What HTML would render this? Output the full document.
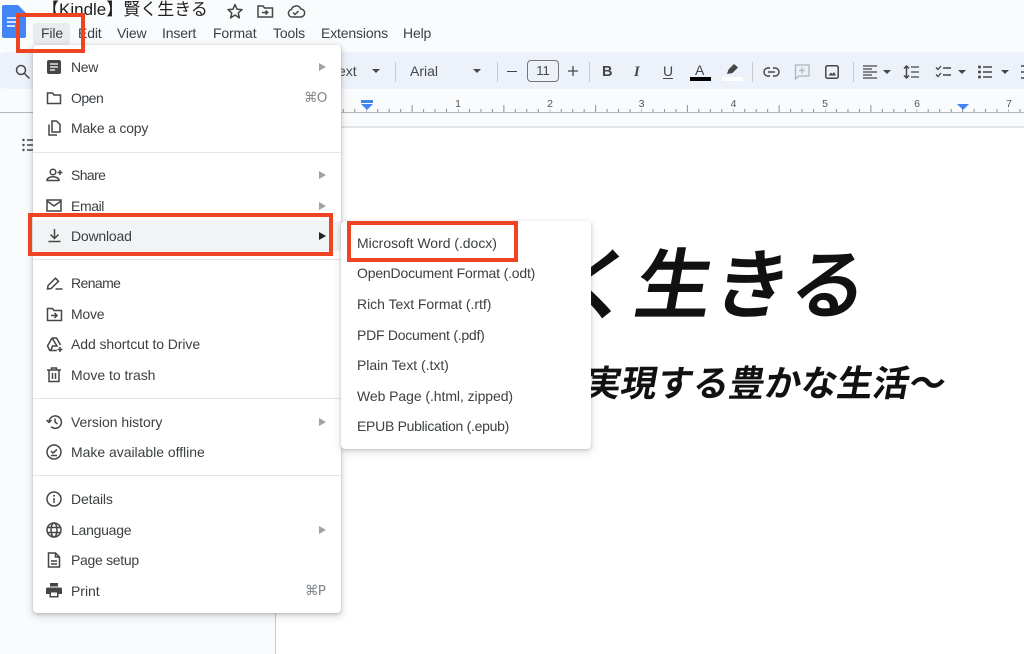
<!DOCTYPE html>
<html><head><meta charset="utf-8">
<style>
*{box-sizing:border-box}
html,body{margin:0;padding:0;background:#f9fbfd}
body{width:1024px;height:654px;overflow:hidden;position:relative;font-family:"Liberation Sans","Noto Sans CJK JP",sans-serif;color:#3c4043;filter:blur(.35px)}
.a{position:absolute}
.t{position:absolute;white-space:nowrap;line-height:18px;letter-spacing:-.15px;font-size:14px;color:#3c4043;transform:translateY(-9px)}
.m{position:absolute;white-space:nowrap;line-height:18px;font-size:14px;letter-spacing:-.03px;color:#3c4043;transform:translateY(-9px)}
.sep{position:absolute;left:33px;width:308px;height:1px;background:#e3e5e8}
.arr{position:absolute;left:319px;width:0;height:0;border-left:7px solid #a0a4a8;border-top:4px solid transparent;border-bottom:4px solid transparent;transform:translateY(-4px)}
.car{position:absolute;width:0;height:0;border-top:4px solid #444746;border-left:4.5px solid transparent;border-right:4.5px solid transparent}
.tsep{position:absolute;top:62px;width:1px;height:20px;background:#c7c9cc}
.red{position:absolute;border:4px solid #ee4423}
svg{position:absolute;overflow:visible}
.i{fill:none;stroke:#444746;stroke-width:1.5}
.f{fill:#444746;stroke:none}
.tb{position:absolute;font-size:14px;color:#444746;white-space:nowrap;line-height:18px}
</style></head><body>

<!-- document surface -->
<div class="a" style="left:276px;top:128px;width:748px;height:526px;background:#fff"></div>
<div class="a" style="left:275px;top:128px;width:1px;height:526px;background:#c9cbce"></div>
<div class="a" style="left:276px;top:126px;width:748px;height:2px;background:#e3e4e6"></div>

<div class="a" style="left:482px;top:231px;font:500 76px/96px 'Noto Sans CJK JP',sans-serif;-webkit-text-stroke:1.2px #111;color:#111;white-space:nowrap;letter-spacing:2px;transform:skewX(-10deg)">賢く生きる</div>
<div class="a" style="left:550px;top:356px;font:700 36px/50px 'Noto Sans CJK JP',sans-serif;color:#111;white-space:nowrap;transform:skewX(-10deg)">〜実現する豊かな生活〜</div>

<!-- toolbar band -->
<div class="a" style="left:-10px;top:52px;width:1040px;height:37px;background:#edf2fa;border-radius:18px 0 0 18px"></div>

<!-- docs logo -->
<svg style="left:0;top:0" width="30" height="42"><path d="M4 5h14l8 8v23a2 2 0 0 1-2 2H4a2 2 0 0 1-2-2V7a2 2 0 0 1 2-2z" fill="#4285f4"/><path d="M7 18h12M7 22h12M7 26h8" stroke="#fff" stroke-width="1.6"/></svg>

<!-- title -->
<div class="a" style="left:42px;top:-1px;font-size:17px;line-height:22px;color:#1f1f1f;white-space:nowrap">【Kindle】賢く生きる</div>
<svg style="left:226px;top:2px" width="18" height="18"><path class="i" d="M9 2.500l2 4.700 5 .4-3.800 3.300 1.200 5L9 13l-4.400 2.900 1.200-5L2 7.600l5-.4z" stroke-linejoin="round"/></svg>
<svg style="left:256px;top:2px" width="18" height="18"><path class="i" d="M2 4h5l1.500 2H16.500v9h-14.500z M9.500 8.500l2.200 2-2.200 2M6 10.500h5.500"/></svg>
<svg style="left:287px;top:2px" width="18" height="18"><path class="i" d="M5 15a3.800 3.800 0 0 1-.6-7.500A5 5 0 0 1 13.800 7a4 4 0 0 1-.3 8z M6 10.500l2 2 3.500-3.500"/></svg>

<!-- menubar -->
<div class="a" style="left:33px;top:23px;width:37px;height:22px;background:#e9ebee;border-radius:3px"></div>
<div class="t" style="left:41px;top:33px">File</div>
<div class="t" style="left:78px;top:33px">Edit</div>
<div class="t" style="left:117px;top:33px">View</div>
<div class="t" style="left:162px;top:33px">Insert</div>
<div class="t" style="left:213px;top:33px">Format</div>
<div class="t" style="left:273px;top:33px">Tools</div>
<div class="t" style="left:321px;top:33px">Extensions</div>
<div class="t" style="left:403px;top:33px">Help</div>

<!-- toolbar contents -->
<svg style="left:14px;top:63px" width="18" height="18"><circle class="i" cx="7" cy="7" r="4.500" stroke-width="1.500"/><path class="i" d="M10.500 10.500L15.500 15.500" stroke-width="1.700"/></svg>
<div class="tb" style="left:338px;top:62px;color:#444746">ext</div>
<div class="car" style="left:372px;top:69px"></div>
<div class="tsep" style="left:395px"></div>
<div class="tb" style="left:410px;top:62px">Arial</div>
<div class="car" style="left:473px;top:69px"></div>
<div class="tsep" style="left:497px"></div>
<div class="a" style="left:507px;top:71px;width:10px;height:1.200px;background:#444746"></div>
<div class="a" style="left:527px;top:60px;width:32px;height:22px;border:1px solid #747775;border-radius:4px;font-size:13px;line-height:20px;text-align:center;color:#444746">11</div>
<svg style="left:567px;top:65px" width="12" height="12"><path d="M6 1v10M1 6h10" stroke="#444746" stroke-width="1.300"/></svg>
<div class="tsep" style="left:589px"></div>
<div class="tb" style="left:602px;top:63px;font-weight:700;font-size:14.500px">B</div>
<div class="tb" style="left:634px;top:63px;font-style:italic;font-weight:700;font-size:14.500px;font-family:'Liberation Serif',serif">I</div>
<div class="tb" style="left:663px;top:62px;font-size:14px">U</div>
<div class="a" style="left:663px;top:78px;width:10px;height:1.300px;background:#444746"></div>
<div class="tb" style="left:695px;top:61px;font-size:14px">A</div>
<div class="a" style="left:690px;top:77px;width:21px;height:4px;background:#000"></div>
<svg style="left:725px;top:62px" width="16" height="14"><path d="M2 12l1.500-4.500L9 2l4 3.500-5.500 5.500z" fill="#444746"/></svg>
<div class="a" style="left:722px;top:77px;width:21px;height:4px;background:#fff"></div>
<div class="tsep" style="left:752px"></div>
<svg style="left:763px;top:65px" width="17" height="14"><path d="M7 3H5a4 4 0 0 0 0 8h2M10 3h2a4 4 0 0 1 0 8h-2M5 7h7" fill="none" stroke="#444746" stroke-width="1.400"/></svg>
<svg style="left:794px;top:64px" width="16" height="16"><path d="M1 1h14v11H5l-3.500 3V1z M8 3.500v6M5 6.500h6" fill="none" stroke="#b0b4b8" stroke-width="1.300"/></svg>
<svg style="left:825px;top:65px" width="14" height="14"><rect x=".8" y=".8" width="12.400" height="12.400" rx="1.500" fill="none" stroke="#444746" stroke-width="1.500"/><path d="M3.500 10.500l2.500-3 1.500 1.500 1.500-2 2 3.500z" fill="#444746"/></svg>
<div class="tsep" style="left:853px"></div>
<svg style="left:863px;top:65px" width="14" height="14"><path d="M0 1h14M0 4h9M0 7h14M0 10h9M0 13h14" stroke="#444746" stroke-width="1.200"/></svg>
<div class="car" style="left:883px;top:70px"></div>
<svg style="left:903px;top:65px" width="16" height="14"><path d="M3.500 1v12M1 3.500L3.500 1 6 3.500M1 10.500L3.500 13 6 10.500" fill="none" stroke="#444746" stroke-width="1.500"/><path d="M8 2h8M8 7h8M8 12h8" stroke="#444746" stroke-width="1.300"/></svg>
<svg style="left:936px;top:65px" width="15" height="14"><path d="M0 2.500l2 2 3-3.500M0 9.500l2 2 3-3.500" fill="none" stroke="#444746" stroke-width="1.300"/><path d="M7 3h8M7 10h8" stroke="#444746" stroke-width="1.400"/></svg>
<div class="car" style="left:958px;top:70px"></div>
<svg style="left:978px;top:65px" width="15" height="14"><circle cx="1.500" cy="2" r="1.500" fill="#444746"/><circle cx="1.500" cy="7" r="1.500" fill="#444746"/><circle cx="1.500" cy="12" r="1.500" fill="#444746"/><path d="M5 2h9M5 7h9M5 12h9" stroke="#444746" stroke-width="1.400"/></svg>
<div class="car" style="left:1001px;top:70px"></div>
<svg style="left:1021px;top:65px" width="5" height="14"><path d="M0 1h3M0 7h3M0 13h3" stroke="#444746" stroke-width="1.500"/></svg>

<!-- ruler -->
<svg style="left:0;top:95px" width="1024" height="22">
<defs><pattern id="r" patternUnits="userSpaceOnUse" x="458" y="0" width="91.750" height="22">
<path d="M0 14v3M11.470 14v3M22.940 14v3M34.400 14v3M57.340 14v3M68.800 14v3M80.280 14v3" stroke="#8a8d90" stroke-width="1"/>
<path d="M45.870 10v7" stroke="#8a8d90" stroke-width="1"/>
</pattern></defs>
<rect x="340" width="684" height="18" fill="url(#r)"/>
<path d="M0 17.500H1024" stroke="#b4b7ba" stroke-width="1"/>
<g font-size="10.500" fill="#555" text-anchor="middle" font-family="Liberation Sans">
<text x="458" y="12">1</text><text x="550" y="12">2</text><text x="641.500" y="12">3</text><text x="733.500" y="12">4</text><text x="825" y="12">5</text><text x="917" y="12">6</text><text x="1009" y="12">7</text></g>
</svg>
<div class="a" style="left:361px;top:100px;width:12px;height:3px;background:#4285f4"></div>
<svg style="left:361px;top:104px" width="12" height="7"><path d="M0 0h12L6 6z" fill="#4285f4"/></svg>
<svg style="left:957px;top:104px" width="12" height="7"><path d="M0 0h12L6 6z" fill="#4285f4"/></svg>

<!-- outline icon -->
<svg style="left:22px;top:138px" width="14" height="14"><circle cx="1.500" cy="2" r="1.200" fill="#444746"/><circle cx="1.500" cy="7" r="1.200" fill="#444746"/><circle cx="1.500" cy="12" r="1.200" fill="#444746"/><path d="M5 2h9M5 7h9M5 12h9" stroke="#444746" stroke-width="1.400"/></svg>

<!-- menu -->
<div class="a" style="left:33px;top:45px;width:308px;height:568px;background:#fff;border-radius:4px;box-shadow:0 1px 3px rgba(60,64,67,.3),0 3px 8px 2px rgba(60,64,67,.13)"></div>
<div class="a" style="left:33px;top:221px;width:308px;height:30px;background:#f1f3f4"></div>
<div class="sep" style="top:152px"></div>
<div class="sep" style="top:259px"></div>
<div class="sep" style="top:398px"></div>
<div class="sep" style="top:475px"></div>

<!-- menu icons -->
<svg style="left:46px;top:59px" width="16" height="16"><rect x="1" y="1" width="14" height="14" rx="2" fill="#444746"/><path d="M4 5h8M4 8h8M4 11h5" stroke="#fff" stroke-width="1.300"/></svg>
<svg style="left:46px;top:90px" width="16" height="16"><path class="i" d="M1.500 3h5l1.500 2h6.500v8.500h-13z"/></svg>
<svg style="left:46px;top:120px" width="16" height="17"><path class="i" d="M6 1h4.500L14 4.500V12H6z M3 4.500V15h8" stroke-width="1.300"/></svg>
<svg style="left:46px;top:167px" width="18" height="16"><circle class="i" cx="7" cy="5" r="2.800" stroke-width="1.300"/><path class="i" d="M1 13.500c0-5 12-5 12 0z M14 3v5M11.500 5.500h5" stroke-width="1.300"/></svg>
<svg style="left:46px;top:198px" width="16" height="15"><path class="i" d="M1 2h14v11H1z M1 3l7 5 7-5" stroke-width="1.400"/></svg>
<svg style="left:47px;top:228px" width="15" height="15"><path class="i" d="M7.500 1v9M3.500 6.500l4 4 4-4M1.500 13.500h12" stroke-width="1.400"/></svg>
<svg style="left:46px;top:275px" width="17" height="16"><path class="i" d="M1.500 14l.6-3.500L9.500 3.200l3 3-7.400 7.300z M9.500 14h7" stroke-width="1.400"/></svg>
<svg style="left:46px;top:306px" width="17" height="16"><path class="i" d="M1.500 2.500h5l1.500 2h7.500v10h-14z M8.500 7l2.500 2.500-2.500 2.500M5 9.500h6" stroke-width="1.300"/></svg>
<svg style="left:46px;top:336px" width="18" height="17"><path class="i" d="M6 2h4.500l4 7M6 2L1.500 10l2.300 4.500h7M6 2l5 8H6.500l-1.500 4M14 11v5M11.500 13.500h5" stroke-width="1.200"/></svg>
<svg style="left:47px;top:367px" width="14" height="16"><path class="i" d="M0 3h14M4.500 3V1h5v2M2 3v11.500h10V3M5.500 6v6M8.500 6v6" stroke-width="1.300"/></svg>
<svg style="left:46px;top:414px" width="17" height="16"><path class="i" d="M3 8a6.200 6.200 0 1 1 2 4.700M9 4.500V8l2.500 2M0.500 6L3 8.500 5.500 6" stroke-width="1.300"/></svg>
<svg style="left:46px;top:444px" width="17" height="16"><circle class="i" cx="8" cy="8" r="7" stroke-width="1.300"/><path class="i" d="M5 7l2 2 4-3.500M5 11.500h6" stroke-width="1.200"/></svg>
<svg style="left:46px;top:491px" width="16" height="16"><circle class="i" cx="8" cy="8" r="7" stroke-width="1.300"/><path d="M8 7v5" stroke="#444746" stroke-width="1.400"/><circle cx="8" cy="4.800" r="1" fill="#444746"/></svg>
<svg style="left:46px;top:522px" width="16" height="16"><circle class="i" cx="8" cy="8" r="7" stroke-width="1.300"/><ellipse class="i" cx="8" cy="8" rx="3" ry="7" stroke-width="1.200"/><path class="i" d="M1.500 5.500h13M1.500 10.500h13" stroke-width="1.200"/></svg>
<svg style="left:47px;top:552px" width="14" height="16"><path class="i" d="M1.500 1h7l4 4v10h-11z M8.500 1v4h4M4 9h6M4 12h6" stroke-width="1.200"/></svg>
<svg style="left:46px;top:583px" width="16" height="15"><path d="M4 0h8v3.500H4zM1.500 4.500h13a1.500 1.500 0 0 1 1.500 1.500v5h-3.500v3.500h-9V11H0V6a1.500 1.500 0 0 1 1.500-1.500z" fill="#444746"/><rect x="5" y="9.500" width="6" height="3.500" fill="#fff"/></svg>

<!-- menu text -->
<div class="m" style="left:71px;top:67px;letter-spacing:-.3px">New</div>
<div class="m" style="left:71px;top:98px;letter-spacing:-.5px">Open</div>
<div class="m" style="left:71px;top:128px;letter-spacing:-.2px">Make a copy</div>
<div class="m" style="left:71px;top:175px;letter-spacing:-.6px">Share</div>
<div class="m" style="left:71px;top:206px;letter-spacing:-.4px">Email</div>
<div class="m" style="left:71px;top:236px;letter-spacing:-.2px">Download</div>
<div class="m" style="left:71px;top:283px;letter-spacing:-.6px">Rename</div>
<div class="m" style="left:71px;top:314px;letter-spacing:-.25px">Move</div>
<div class="m" style="left:71px;top:344px;letter-spacing:-.08px">Add shortcut to Drive</div>
<div class="m" style="left:71px;top:375px">Move to trash</div>
<div class="m" style="left:71px;top:422px">Version history</div>
<div class="m" style="left:71px;top:452px">Make available offline</div>
<div class="m" style="left:71px;top:499px;letter-spacing:-.15px">Details</div>
<div class="m" style="left:71px;top:530px;letter-spacing:-.25px">Language</div>
<div class="m" style="left:71px;top:560px;letter-spacing:-.3px">Page setup</div>
<div class="m" style="left:71px;top:591px">Print</div>
<div class="m" style="left:304px;top:98px;color:#80868b;font-family:'DejaVu Sans',sans-serif;font-size:13.500px;letter-spacing:-.7px">⌘O</div>
<div class="m" style="left:305px;top:591px;color:#80868b;font-family:'DejaVu Sans',sans-serif;font-size:13.500px;letter-spacing:-.7px">⌘P</div>
<div class="arr" style="top:67px"></div>
<div class="arr" style="top:175px"></div>
<div class="arr" style="top:206px"></div>
<div class="arr" style="top:236px;border-left-color:#222"></div>
<div class="arr" style="top:422px"></div>
<div class="arr" style="top:530px"></div>

<!-- submenu -->
<div class="a" style="left:341px;top:221px;width:250px;height:228px;background:#fff;border-radius:4px;box-shadow:0 1px 3px rgba(60,64,67,.25),0 3px 8px 1px rgba(60,64,67,.12)"></div>
<div class="m" style="left:357px;top:243px">Microsoft Word (.docx)</div>
<div class="m" style="left:357px;top:273px;letter-spacing:-.18px">OpenDocument Format (.odt)</div>
<div class="m" style="left:357px;top:304px">Rich Text Format (.rtf)</div>
<div class="m" style="left:357px;top:335px;letter-spacing:-.25px">PDF Document (.pdf)</div>
<div class="m" style="left:357px;top:365px">Plain Text (.txt)</div>
<div class="m" style="left:357px;top:396px;letter-spacing:-.07px">Web Page (.html, zipped)</div>
<div class="m" style="left:357px;top:426px;letter-spacing:-.28px">EPUB Publication (.epub)</div>

<!-- red annotation boxes -->
<div class="red" style="left:16px;top:13px;width:69px;height:40px"></div>
<div class="red" style="left:28px;top:213px;width:305px;height:43px"></div>
<div class="red" style="left:347px;top:221px;width:171px;height:41px"></div>
</body></html>
